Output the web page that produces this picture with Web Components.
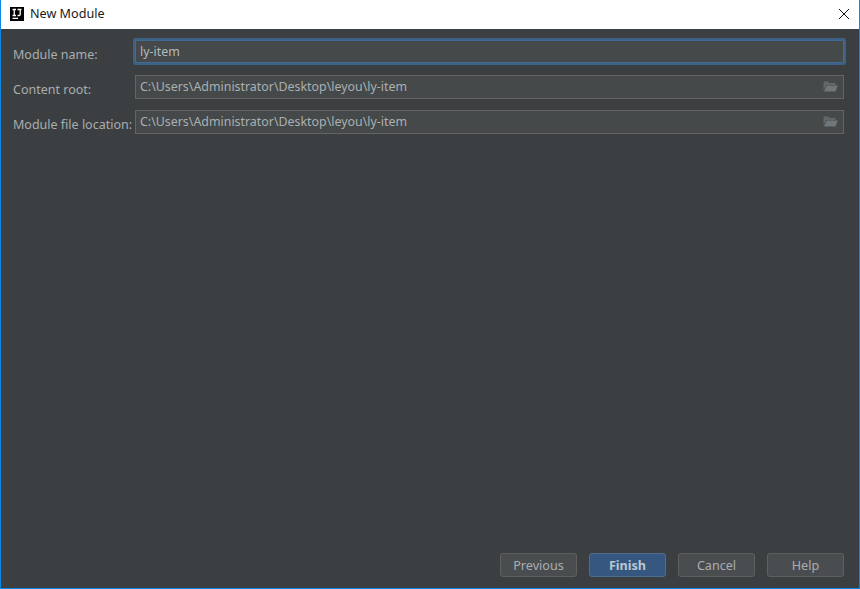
<!DOCTYPE html>
<html>
<head>
<meta charset="utf-8">
<title>New Module</title>
<style>
html, body { margin: 0; height: 100%; background: #3c3f41; }
body { font-family: "Noto Sans", "Open Sans", sans-serif; font-size: 13px; }
</style>
</head>
<body>
<module-dialog>
  <span slot="title">New Module</span>
  <form-row label="Module name:" value="ly-item" focused></form-row>
  <form-row label="Content root:" value="C:\Users\Administrator\Desktop\leyou\ly-item" browse></form-row>
  <form-row label="Module file location:" value="C:\Users\Administrator\Desktop\leyou\ly-item" browse></form-row>
  <dialog-button slot="buttons">Previous</dialog-button>
  <dialog-button slot="buttons" primary>Finish</dialog-button>
  <dialog-button slot="buttons">Cancel</dialog-button>
  <dialog-button slot="buttons">Help</dialog-button>
</module-dialog>

<script>
const dialogTemplate = document.createElement('template');
dialogTemplate.innerHTML = `
<style>
:host {
  display: flex;
  flex-direction: column;
  box-sizing: border-box;
  width: 860px;
  height: 589px;
  background: #3c3f41;
  border: solid #0c87e3;
  border-width: 0 1px 1px 1px;
}
.titlebar {
  display: flex;
  align-items: center;
  box-sizing: border-box;
  height: 29px;
  flex: none;
  background: #fff;
  color: #1a1a1a;
  font-size: 12.6px;
  padding: 0 0 2px 9px;
  gap: 6px;
}
.logo {
  width: 14px;
  height: 14px;
  flex: none;
  display: block;
}
.close {
  margin-left: auto;
  margin-right: 9px;
  display: block;
}
.form {
  display: flex;
  flex-direction: column;
  gap: 9px;
  padding: 10px 15px 0 12px;
  flex: 1;
}
.buttons {
  display: flex;
  justify-content: flex-end;
  gap: 12px;
  padding: 0 15px 11px 0;
}
</style>
<div class="titlebar">
  <svg class="logo" viewBox="0 0 14 14">
    <rect width="14" height="14" fill="#000"/>
    <path d="M2.500 2.500h3.500M4.250 2.500v6M2.500 8.500h3.500M7.500 2.500h4M10.200 2.500v5q0 1-1 1h-1.700M2.500 11.300h5.500" fill="none" stroke="#fff" stroke-width="1.300"/>
  </svg>
  <slot name="title"></slot>
  <svg class="close" width="12" height="12" viewBox="0 0 12 12">
    <path d="M1 1l10 10M11 1L1 11" stroke="#111" stroke-width="1" fill="none"/>
  </svg>
</div>
<div class="form"><slot></slot></div>
<div class="buttons"><slot name="buttons"></slot></div>
`;

class ModuleDialog extends HTMLElement {
  constructor() {
    super();
    this.attachShadow({ mode: 'open' });
    this.shadowRoot.appendChild(dialogTemplate.content.cloneNode(true));
  }
}
customElements.define('module-dialog', ModuleDialog);

const rowTemplate = document.createElement('template');
rowTemplate.innerHTML = `
<style>
:host {
  display: flex;
  align-items: center;
  height: 26px;
}
.label {
  width: 122px;
  flex: none;
  color: #a8adb0;
  font-size: 12.5px;
  white-space: nowrap;
  position: relative;
  top: 2px;
}
.field {
  flex: 1;
  box-sizing: border-box;
  height: 24px;
  display: flex;
  align-items: center;
  padding: 0 4px 2px;
  background: #45494a;
  border: 1px solid #646464;
  color: #a9b0b2;
  font-size: 12.4px;
  white-space: nowrap;
}
:host([focused]) .field {
  flex: 1;
  height: 23px;
  align-self: flex-start;
  margin-top: 1px;
  padding-bottom: 0;
  border: 1px solid #3f6b96;
  box-shadow: 0 0 0 2px #3d6185;
  border-radius: 1px;
  color: #b4babc;
}
svg { margin-left: auto; margin-right: 1px; flex: none; }
</style>
<span class="label"></span>
<div class="field">
  <span class="value"></span>
</div>
`;

class FormRow extends HTMLElement {
  constructor() {
    super();
    this.attachShadow({ mode: 'open' });
    this.shadowRoot.appendChild(rowTemplate.content.cloneNode(true));
  }

  connectedCallback() {
    this.shadowRoot.querySelector('.label').textContent = this.getAttribute('label');
    this.shadowRoot.querySelector('.value').textContent = this.getAttribute('value');
    if (this.hasAttribute('browse')) {
      this.shadowRoot.querySelector('.field').insertAdjacentHTML('beforeend', `
        <svg width="15" height="11" viewBox="0 0 15 11">
          <path d="M0.500 9V1.500Q0.500 0.500 1.500 0.500H5L6.500 2H12.500V4H3.500L0.500 9Z" fill="#62686a"/>
          <path d="M3.800 4.500H14.800L12.500 10.500H0.800Z" fill="#70777a"/>
        </svg>`);
    }
  }
}
customElements.define('form-row', FormRow);

const buttonTemplate = document.createElement('template');
buttonTemplate.innerHTML = `
<style>
:host {
  display: flex;
  align-items: center;
  justify-content: center;
  box-sizing: border-box;
  width: 77px;
  height: 24px;
  background: #4a4d4f;
  border: 1px solid #5e6060;
  border-radius: 3px;
  color: #a9adb0;
  font-size: 12.6px;
}
:host([primary]) {
  background: #365880;
  border-color: #4c708c;
  color: #bbc6d1;
  font-weight: 700;
}
</style>
<slot></slot>
`;

class DialogButton extends HTMLElement {
  constructor() {
    super();
    this.attachShadow({ mode: 'open' });
    this.shadowRoot.appendChild(buttonTemplate.content.cloneNode(true));
  }
}
customElements.define('dialog-button', DialogButton);
</script>
</body>
</html>
